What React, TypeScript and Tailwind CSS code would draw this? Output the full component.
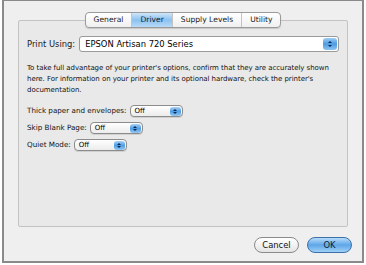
import { ReactNode } from 'react'

const font = { fontFamily: '"Lucida Grande", "DejaVu Sans", "Liberation Sans", sans-serif' }

function Stepper() {
  return (
    <div className="w-[14px] h-[12px] rounded-[3px] bg-gradient-to-b from-[#9fcdf3] via-[#4b9be3] to-[#8cc3f0] flex flex-col items-center justify-center gap-[2px]">
      <span className="block w-0 h-0 border-l-[2px] border-r-[2px] border-b-[2px] border-l-transparent border-r-transparent border-b-[#0a2a55]" />
      <span className="block w-0 h-0 border-l-[2px] border-r-[2px] border-t-[2px] border-l-transparent border-r-transparent border-t-[#0a2a55]" />
    </div>
  )
}

function SmallPopup() {
  return (
    <div className="w-[53px] h-[12px] rounded-[4px] border border-[#8c8c8c] bg-gradient-to-b from-white to-[#ececec] flex items-center justify-between pl-[4px] pr-[1px] shadow-[0_1px_0_#d0d0d0]">
      <span className="text-[7px] leading-none text-black">Off</span>
      <div className="w-[11px] h-[9px] rounded-[3px] bg-gradient-to-b from-[#a7d1f4] via-[#4f9de4] to-[#93c7f1] flex flex-col items-center justify-center gap-[1px]">
        <span className="block w-0 h-0 border-l-[2px] border-r-[2px] border-b-[2px] border-l-transparent border-r-transparent border-b-[#0a2a55]" />
        <span className="block w-0 h-0 border-l-[2px] border-r-[2px] border-t-[2px] border-l-transparent border-r-transparent border-t-[#0a2a55]" />
      </div>
    </div>
  )
}

function Row({ label, children }: { label: string; children: ReactNode }) {
  return (
    <div className="flex items-center gap-[3px] h-[12px]">
      <span className="text-[7.2px] text-[#111]">{label}</span>
      {children}
    </div>
  )
}

function Tab({ label, active, last }: { label: string; active?: boolean; last?: boolean }) {
  return (
    <div
      className={
        'h-full flex items-center px-[8px] text-[7.6px] ' +
        (active
          ? 'bg-gradient-to-b from-[#cfe6fa] via-[#8cc1ef] to-[#b7daf7] text-[#0b1f3a]'
          : 'text-[#1a1a1a]') +
        (last ? '' : ' border-r border-[#c4c4c4]')
      }
    >
      {label}
    </div>
  )
}

export default function App() {
  return (
    <div className="w-[366px] h-[265px] bg-white" style={font}>
      <div className="w-[362px] h-[263px] ml-[2px] border-l-2 border-r-2 border-b-2 border-t border-[#8a8a8a] bg-[#efefef] pt-[19px] px-[14px] flex flex-col">
        <div className="relative h-[207px] border border-[#c3c3c3] bg-[#e9e9e9] rounded-[2px] px-[8px] pt-[15px]">
          <div className="absolute left-0 right-0 -top-[9px] flex justify-center">
            <div className="h-[16px] flex rounded-[4px] border border-[#9a9a9a] bg-gradient-to-b from-white to-[#f0f0f0] overflow-hidden shadow-[0_1px_1px_rgba(0,0,0,0.15)]">
              <Tab label="General" />
              <Tab label="Driver" active />
              <Tab label="Supply Levels" />
              <Tab label="Utility" last />
            </div>
          </div>

          <div className="flex items-center gap-[4px] h-[16px]">
            <span className="text-[8.4px] text-[#1a1a1a]">Print Using:</span>
            <div className="flex-1 h-[16px] rounded-[3px] border border-[#9a9a9a] bg-white flex items-center justify-between pl-[5px] pr-[1px]">
              <span className="text-[8.4px] text-black">EPSON Artisan 720 Series</span>
              <Stepper />
            </div>
          </div>

          <p className="mt-[11px] -mr-[4px] text-[7px] tracking-[-0.05px] leading-[11px] text-[#111]">
            To take full advantage of your printer's options, confirm that they are accurately shown here. For information on your printer and its optional hardware, check the printer's documentation.
          </p>

          <div className="mt-[9px] flex flex-col gap-[5px]">
            <Row label="Thick paper and envelopes:"><SmallPopup /></Row>
            <Row label="Skip Blank Page:"><SmallPopup /></Row>
            <Row label="Quiet Mode:"><SmallPopup /></Row>
          </div>
        </div>

        <div className="flex justify-end gap-[8px] mt-[10px] -mr-[4px]">
          <div className="w-[45px] h-[16px] rounded-full border border-[#8a8a8a] bg-gradient-to-b from-white via-[#f2f2f2] to-[#e4e4e4] flex items-center justify-center text-[8.4px] text-[#111]">
            Cancel
          </div>
          <div className="w-[45px] h-[16px] rounded-full border border-[#3d6fa8] bg-gradient-to-b from-[#b6dcfa] via-[#5ea6e8] to-[#9ed0f6] flex items-center justify-center text-[8.4px] text-[#0b1f3a]">
            OK
          </div>
        </div>
      </div>
    </div>
  )
}
